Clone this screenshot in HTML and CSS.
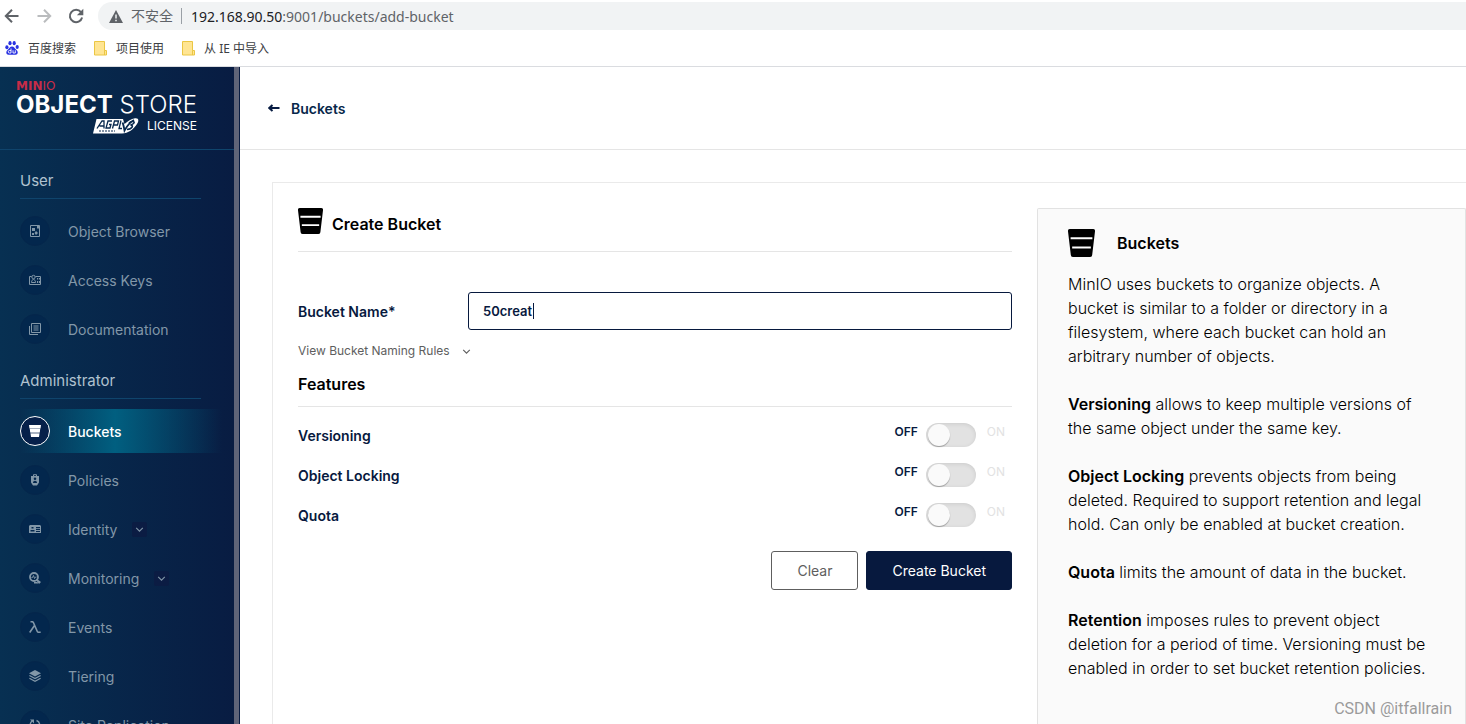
FILE: index.html
```html
<!DOCTYPE html>
<html lang="en">
<head>
<meta charset="utf-8">
<title>MinIO Console - Create Bucket</title>
<link rel="stylesheet" href="styles.css">
</head>
<body>
<svg class="defs" aria-hidden="true">
  <symbol id="bucket" viewBox="0 0 26 27">
    <path fill="currentColor" d="M2 0h22a2 2 0 0 1 2 2.300L23.300 25a2 2 0 0 1-2 2H4.700a2 2 0 0 1-2-2L0 2.300A2 2 0 0 1 2 0z"/>
    <path class="bucket-line" d="M2.500 9h21M4 17.800h18"/>
  </symbol>
  <symbol id="chevron" viewBox="0 0 10 10">
    <path fill="none" stroke="currentColor" d="M2 3.500l3 3 3-3"/>
  </symbol>
  <symbol id="folder" viewBox="0 0 13 15">
    <path fill="#ffe593" stroke="#ebc643" d="M.5.500h10v9h2v4.500H.5zM10.500 9.500v4.500"/>
  </symbol>
</svg>

<header class="browser">
  <div class="toolbar">
    <button class="tool" aria-label="Back"><svg viewBox="0 0 16 16"><path d="M14.500 8H2M8 1.800L1.800 8 8 14.200"/></svg></button>
    <button class="tool tool-off" aria-label="Forward"><svg viewBox="0 0 16 16"><path d="M1.500 8H14M8 1.800L14.200 8 8 14.200"/></svg></button>
    <button class="tool" aria-label="Reload"><svg viewBox="0 0 16 16"><path d="M13 4.200A6.200 6.200 0 1 0 14.100 9.500"/><path class="solid" d="M15.300.8v6.400H8.900z"/></svg></button>
    <div class="address">
      <svg class="warn" viewBox="0 0 14 13"><path fill="#5f6368" d="M7 0l7 13H0z"/><path stroke="#f1f3f4" stroke-width="1.500" d="M7 4.500v4M7 9.700v1.500"/></svg>
      <span class="insecure">不安全</span>
      <span class="url"><span class="host">192.168.90.50</span>:9001/buckets/add-bucket</span>
    </div>
  </div>
  <nav class="bookmarks" aria-label="Bookmarks">
    <a href="#"><svg class="paw" viewBox="0 0 14 14"><g fill="#2932e1"><ellipse cx="1.900" cy="6.200" rx="1.600" ry="2"/><ellipse cx="5" cy="2.200" rx="1.600" ry="2.100"/><ellipse cx="9.200" cy="2.200" rx="1.600" ry="2.100"/><ellipse cx="12.200" cy="6" rx="1.600" ry="2"/><path d="M7 5.500c2 0 2.500 1.800 4 3.100 1.700 1.500 2 2.500 1.500 3.900-.7 1.800-3 1.300-5.500 1.300s-4.800.5-5.500-1.300C1 11 1.500 10 3 8.600 4.500 7.300 5 5.500 7 5.500z"/></g><path fill="none" stroke="#fff" stroke-width=".9" d="M6 7.500v4.500H4.500a1 1 0 0 1 0-2.500H6M8 9.300v2.700h2.300V9.300"/></svg>百度搜索</a>
    <a href="#"><svg class="folder"><use href="#folder"/></svg>项目使用</a>
    <a href="#"><svg class="folder"><use href="#folder"/></svg>从 IE 中导入</a>
  </nav>
</header>

<div class="app">
  <aside class="sidebar">
    <div class="logo">
      <div class="logo-brand"><b>MIN</b>IO</div>
      <div class="logo-name"><b>OBJECT</b> STORE</div>
      <div class="logo-license">
        <svg class="agpl" viewBox="0 0 46 16">
          <path fill="#fff" d="M3.500 1H30l1.500 5C35 3 38 1 42 .3c4-.5 4 2.700 2 5.700-3 5-9 9.500-15 9.500H0z"/>
          <g fill="none" stroke="#08294e" stroke-width="1.300">
            <path d="M4 10.500L9 3h2v7.500M6.500 8H11M19 3h-4l-2 7h4l1-3.500h-2M19.500 10.500l2-7.500h4l-1 4h-4M28 2.500l-2 8h3"/>
            <path stroke-width="1.800" d="M29.500 4.500c1 2 1.500 5 2 8C34 8 37 4 41 2"/>
            <path stroke-width="1.600" d="M36 5c2-2 6-2 5 0-.5 1-2 1.500-3.500 2 3.500.2 2 4.200-3.500 4.500"/>
            <path stroke-width="1" stroke-dasharray="2 1" d="M6 13h16"/>
          </g>
        </svg>
        <span>LICENSE</span>
      </div>
    </div>
    <nav class="menu">
      <h2>User</h2>
      <ul>
        <li><a href="#"><span class="dot"><svg viewBox="0 0 12 12"><path class="ln" d="M1.500.5h9v11h-9z"/><path d="M3 3h3v3H3zM7 6l2 2-2 2-1.500-2zM3 8h2v2H3zM8 1h2v2.500H8z"/></svg></span>Object Browser</a></li>
        <li><a href="#"><span class="dot"><svg viewBox="0 0 12 12"><path class="ln" d="M2.500 2.500h-2v8h11v-8h-5"/><circle class="ln" cx="4.500" cy="3" r="1.700"/><path class="ln" d="M2.500 8.500c0-4 4-4 4 0z"/><path d="M8 4h1.200v1.500H8zM10 4h1v1.500h-1zM8 7h1.200v2H8zM10 7h1v2h-1z"/></svg></span>Access Keys</a></li>
        <li><a href="#"><span class="dot"><svg viewBox="0 0 12 12"><path class="ln" d="M2.500.5h9v9h-9zM.5 3v8.500H9M4.500 3h5M4.500 5h5M4.500 7h5"/></svg></span>Documentation</a></li>
      </ul>
      <h2>Administrator</h2>
      <ul>
        <li><a href="#" class="current" aria-current="page"><span class="dot"><svg viewBox="0 0 12 12"><path d="M0 0h12l-.4 3H.4zM.8 4h10.400l-.4 3.500H1.200zM1.500 8.500h9L10 12H2z"/><path opacity=".65" d="M.5 3h11v1H.5zM1.500 7.500h9v1h-9z"/></svg></span>Buckets</a></li>
        <li><a href="#"><span class="dot"><svg viewBox="0 0 12 12"><path class="ln" d="M4.500 2V.7h3V2"/><path fill-rule="evenodd" d="M2 2h8v6.500L8 11.500H4L2 8.500zM6 3.500a1.300 1.300 0 1 0 0 2.600 1.300 1.300 0 0 0 0-2.600zM4 9h4c0-3-4-3-4 0z"/></svg></span>Policies</a></li>
        <li><a href="#"><span class="dot"><svg viewBox="0 0 12 12"><path fill-rule="evenodd" d="M1 2h10l1 1v7H0V3zM2.500 4v1.500h2V4zM1.500 7v1.500h4V7zM7 4v1.300h4V4zM7 6v1h4V6zM7 8v1h4V8z"/></svg></span>Identity<svg class="fold"><use href="#chevron"/></svg></a></li>
        <li><a href="#"><span class="dot"><svg viewBox="0 0 12 12"><circle cx="5" cy="5" r="4" fill="none" stroke="currentColor" stroke-width="1.800"/><path class="ln" d="M2.500 5.500h1l1-2 1 3 1-1.500h1"/><path d="M8 7l4 3-2 2-3-4zM9 10H5v1.500h4z"/></svg></span>Monitoring<svg class="fold"><use href="#chevron"/></svg></a></li>
        <li><a href="#"><span class="dot"><svg viewBox="0 0 12 12"><path fill="none" stroke="currentColor" stroke-width="1.600" d="M1.500.7h1.600c.7 0 1.100.4 1.400 1.100L8.300 10.500c.4.900 1.600 1 3.300.6M5.500 4.500L.7 11.500"/></svg></span>Events</a></li>
        <li><a href="#"><span class="dot"><svg viewBox="0 0 12 12"><path d="M6 0l6 3.200-6 3.200-6-3.200z"/><path fill="none" stroke="currentColor" stroke-width="1.300" d="M.4 5.500L6 8.500l5.600-3M.4 8.200L6 11.200l5.600-3"/></svg></span>Tiering</a></li>
        <li><a href="#"><span class="dot"><svg viewBox="0 0 12 12"><path fill="none" stroke="currentColor" stroke-width="1.400" d="M4.500 10.500A5 5 0 0 1 3 2M7.500 1.500A5 5 0 0 1 9 10"/><path d="M1 .5h4v4zM11 11.500H7v-4z"/></svg></span>Site Replication</a></li>
      </ul>
    </nav>
  </aside>

  <main class="main">
    <div class="page-head">
      <a href="#"><svg viewBox="0 0 12 8"><path d="M11.500 4H2M4.500 1L1.300 4l3.200 3"/></svg>Buckets</a>
    </div>
    <div class="card">
      <form class="form">
        <h1 class="form-title"><svg class="bucket-md"><use href="#bucket"/></svg>Create Bucket</h1>
        <div class="field">
          <label for="name">Bucket Name*</label>
          <div class="field-box">
            <input id="name" type="text" value="50creat">
            <span class="caret"></span>
          </div>
        </div>
        <button type="button" class="rules">View Bucket Naming Rules<svg><use href="#chevron"/></svg></button>
        <h2 class="section">Features</h2>
        <div class="switches">
          <div class="switch-row"><label for="versioning">Versioning</label><div class="switch"><span class="off">OFF</span><input type="checkbox" id="versioning"><span class="on">ON</span></div></div>
          <div class="switch-row"><label for="locking">Object Locking</label><div class="switch"><span class="off">OFF</span><input type="checkbox" id="locking"><span class="on">ON</span></div></div>
          <div class="switch-row"><label for="quota">Quota</label><div class="switch"><span class="off">OFF</span><input type="checkbox" id="quota"><span class="on">ON</span></div></div>
        </div>
        <div class="actions">
          <button type="reset" class="btn">Clear</button>
          <button type="button" class="btn btn-main">Create Bucket</button>
        </div>
      </form>
      <section class="help">
        <h2><svg class="bucket-lg"><use href="#bucket"/></svg>Buckets</h2>
        <p>MinIO uses buckets to organize objects. A bucket is similar to a folder or directory in a filesystem, where each bucket can hold an arbitrary number of objects.</p>
        <p><b>Versioning</b> allows to keep multiple versions of the same object under the same key.</p>
        <p><b>Object Locking</b> prevents objects from being deleted. Required to support retention and legal hold. Can only be enabled at bucket creation.</p>
        <p><b>Quota</b> limits the amount of data in the bucket.</p>
        <p><b>Retention</b> imposes rules to prevent object deletion for a period of time. Versioning must be enabled in order to set bucket retention policies.</p>
      </section>
    </div>
  </main>
</div>
<div class="watermark">CSDN @itfallrain</div>
</body>
</html>
```
FILE: styles.css
```css
* { box-sizing: border-box; }
body {
  margin: 0;
  height: 100vh;
  display: flex;
  flex-direction: column;
  overflow: hidden;
  position: relative;
  background: #fff;
  color: #000;
  font-family: Inter, "Noto Sans CJK SC", sans-serif;
  font-size: 14px;
}
h1, h2, p, ul { margin: 0; padding: 0; }
ul { list-style: none; }
a { color: inherit; text-decoration: none; }
button { font: inherit; background: none; border: 0; padding: 0; }
svg { flex: none; }
.defs { position: absolute; width: 0; height: 0; }

/* browser chrome */
.browser {
  flex: none;
  border-bottom: 1px solid #dadce0;
  font-family: "Noto Sans", "Noto Sans CJK SC", sans-serif;
  color: #3c4043;
}
.toolbar { display: flex; align-items: center; gap: 16px; padding: 2px 0 0 4px; }
.tool { width: 16px; height: 16px; color: #5f6368; }
.tool-off { color: #babcbe; }
.tool svg { display: block; width: 16px; height: 16px; fill: none; stroke: currentColor; stroke-width: 2; }
.tool .solid { fill: currentColor; stroke: none; }
.address {
  flex: 1;
  display: flex;
  align-items: center;
  height: 28px;
  margin-left: -2px;
  padding-left: 11px;
  border-radius: 14px 0 0 14px;
  background: #f1f3f4;
  color: #5f6368;
}
.warn { width: 14px; height: 13px; }
.insecure { margin-left: 8px; padding-right: 8px; border-right: 1px solid #9aa0a6; font-size: 14px; line-height: 16px; }
.url { margin-left: 9px; font-size: 14px; }
.host { color: #202124; }
.bookmarks { display: flex; align-items: center; gap: 18px; height: 36px; padding-left: 5px; font-size: 12px; }
.bookmarks a { display: flex; align-items: center; gap: 9px; }
.paw { width: 14px; height: 14px; }
.folder { width: 13px; height: 15px; }

/* sidebar */
.app { flex: 1; display: flex; min-height: 0; }
.sidebar {
  flex: none;
  width: 240px;
  overflow: hidden;
  border-right: 1px solid #081c42;
  background: linear-gradient(#5f6478, #5f6478) right / 5px 100% no-repeat,
    linear-gradient(90deg, #073052 0, #081c42 235px);
  color: #8297a8;
}
.logo { width: 234px; height: 83px; padding: 13px 0 0 16px; border-bottom: 1px solid #0f446c; color: #fff; }
.logo-brand { font: 12px/12px "DejaVu Sans", sans-serif; color: #c72c48; }
.logo-name { font-size: 24px; line-height: 26px; font-weight: 300; white-space: nowrap; }
.logo-name b { font-weight: 700; }
.logo-license { display: flex; align-items: center; gap: 8px; width: 181px; justify-content: flex-end; font-size: 12px; line-height: 16px; }
.agpl { width: 46px; height: 16px; }
.menu { padding: 6px 0 0; }
.menu h2 {
  margin: 0 38px 10px 20px;
  padding: 15px 0 7px;
  border-bottom: 1px solid #0f446c;
  color: #b0c2cf;
  font-size: 15px;
  font-weight: 400;
  line-height: 20px;
}
.menu li { padding-bottom: 5px; }
.menu a { display: flex; align-items: center; height: 44px; width: 234px; padding-left: 20px; }
.menu .current {
  color: #fff;
  font-weight: 500;
  background: linear-gradient(90deg, transparent 20px, #015f80 115px, transparent 222px);
}
.dot {
  display: grid;
  place-items: center;
  width: 30px;
  height: 30px;
  margin-right: 18px;
  border: 1px solid #05264b;
  border-radius: 50%;
  background: #03274d;
}
.current .dot { border-color: #fff; background: #06204a; }
.dot svg { width: 12px; height: 12px; fill: currentColor; }
.ln { fill: none; stroke: currentColor; }
.fold { width: 15px; height: 15px; margin-left: 15px; padding: 2px; border-radius: 2px; background: #0b1c43; }

/* page */
.main { flex: 1; display: flex; flex-direction: column; min-width: 0; }
.page-head { flex: none; display: flex; align-items: center; height: 83px; padding-left: 28px; border-bottom: 1px solid #e5e5e5; }
.page-head a { display: flex; align-items: center; gap: 11px; color: #07274a; font-weight: 600; }
.page-head svg { width: 12px; height: 8px; fill: none; stroke: #081c42; stroke-width: 2; }
.card {
  flex: 1;
  display: grid;
  grid-template-columns: minmax(0, 1fr) 429px;
  gap: 25px;
  min-height: 0;
  margin: 32px 0 0 32px;
  padding: 25px 0 0 25px;
  border: solid #eaeaea;
  border-width: 1px 0 0 1px;
}
.bucket-line { stroke: #fff; stroke-width: 2; }
.form { color: #07193e; }
.form-title {
  display: flex;
  align-items: flex-end;
  gap: 9px;
  padding-bottom: 17px;
  border-bottom: 1px solid #e5e5e5;
  color: #000;
  font-size: 16px;
  line-height: 20px;
  font-weight: 600;
}
.bucket-md { width: 25px; height: 26px; }
.field { display: flex; align-items: center; margin-top: 40px; font-weight: 600; }
.field label { width: 170px; }
.field-box { flex: 1; position: relative; }
.field input {
  display: block;
  width: 100%;
  height: 38px;
  padding: 0 14px;
  border: 1px solid #07193e;
  border-radius: 3px;
  outline: 0;
  color: #07193e;
  font: 600 13px Inter, sans-serif;
}
.caret { position: absolute; left: 65px; top: 11px; width: 1px; height: 16px; background: #07193e; }
.rules { display: flex; align-items: center; gap: 11px; margin-top: 11px; color: #5e5e5e; font-size: 12px; line-height: 20px; }
.rules svg { width: 11px; height: 11px; }
.section { margin-top: 13px; padding-bottom: 12px; border-bottom: 1px solid #e5e5e5; color: #000; font-size: 16px; line-height: 20px; font-weight: 600; }
.switches { margin-top: 8px; }
.switch-row { display: flex; align-items: center; justify-content: space-between; height: 40px; font-weight: 600; }
.switch { display: flex; align-items: flex-start; padding-right: 7px; font-size: 12px; line-height: 18px; }
.switch input {
  appearance: none;
  width: 50px;
  height: 24px;
  margin: 0 11px 0 8px;
  padding: 1px 2px;
  border-radius: 12px;
  background: #e2e2e2;
  box-shadow: inset 0 1px 4px rgba(0, 0, 0, .1);
}
.switch input::before {
  content: "";
  display: block;
  width: 22px;
  height: 22px;
  border-radius: 50%;
  background: #fafafa;
  box-shadow: 0 1px 1px rgba(0, 0, 0, .3);
}
.switch input:checked::before { margin-left: auto; }
.on { color: #e2e2e2; font-weight: 400; }
.actions { display: flex; justify-content: flex-end; gap: 8px; margin-top: 16px; }
.btn { height: 39px; padding: 0 25px; border: 1px solid #5e5e5e; border-radius: 3px; color: #5e5e5e; }
.btn-main { border-color: #07193e; background: #07193e; color: #fff; }

.help { padding: 20px 36px 20px 30px; border: 1px solid #e2e2e2; border-bottom: 0; border-radius: 2px 2px 0 0; background: #fafafa; font-size: 16px; line-height: 24px; font-weight: 300; }
.help h2 { display: flex; align-items: center; gap: 22px; margin-bottom: 15px; font-size: 16px; font-weight: 600; }
.help p + p { margin-top: 24px; }
.help b { font-weight: 600; }
.bucket-lg { width: 27px; height: 28px; }

.watermark { position: absolute; right: 14px; bottom: 5px; color: #9b9b9b; font: 16px/20px Roboto, sans-serif; }
```
